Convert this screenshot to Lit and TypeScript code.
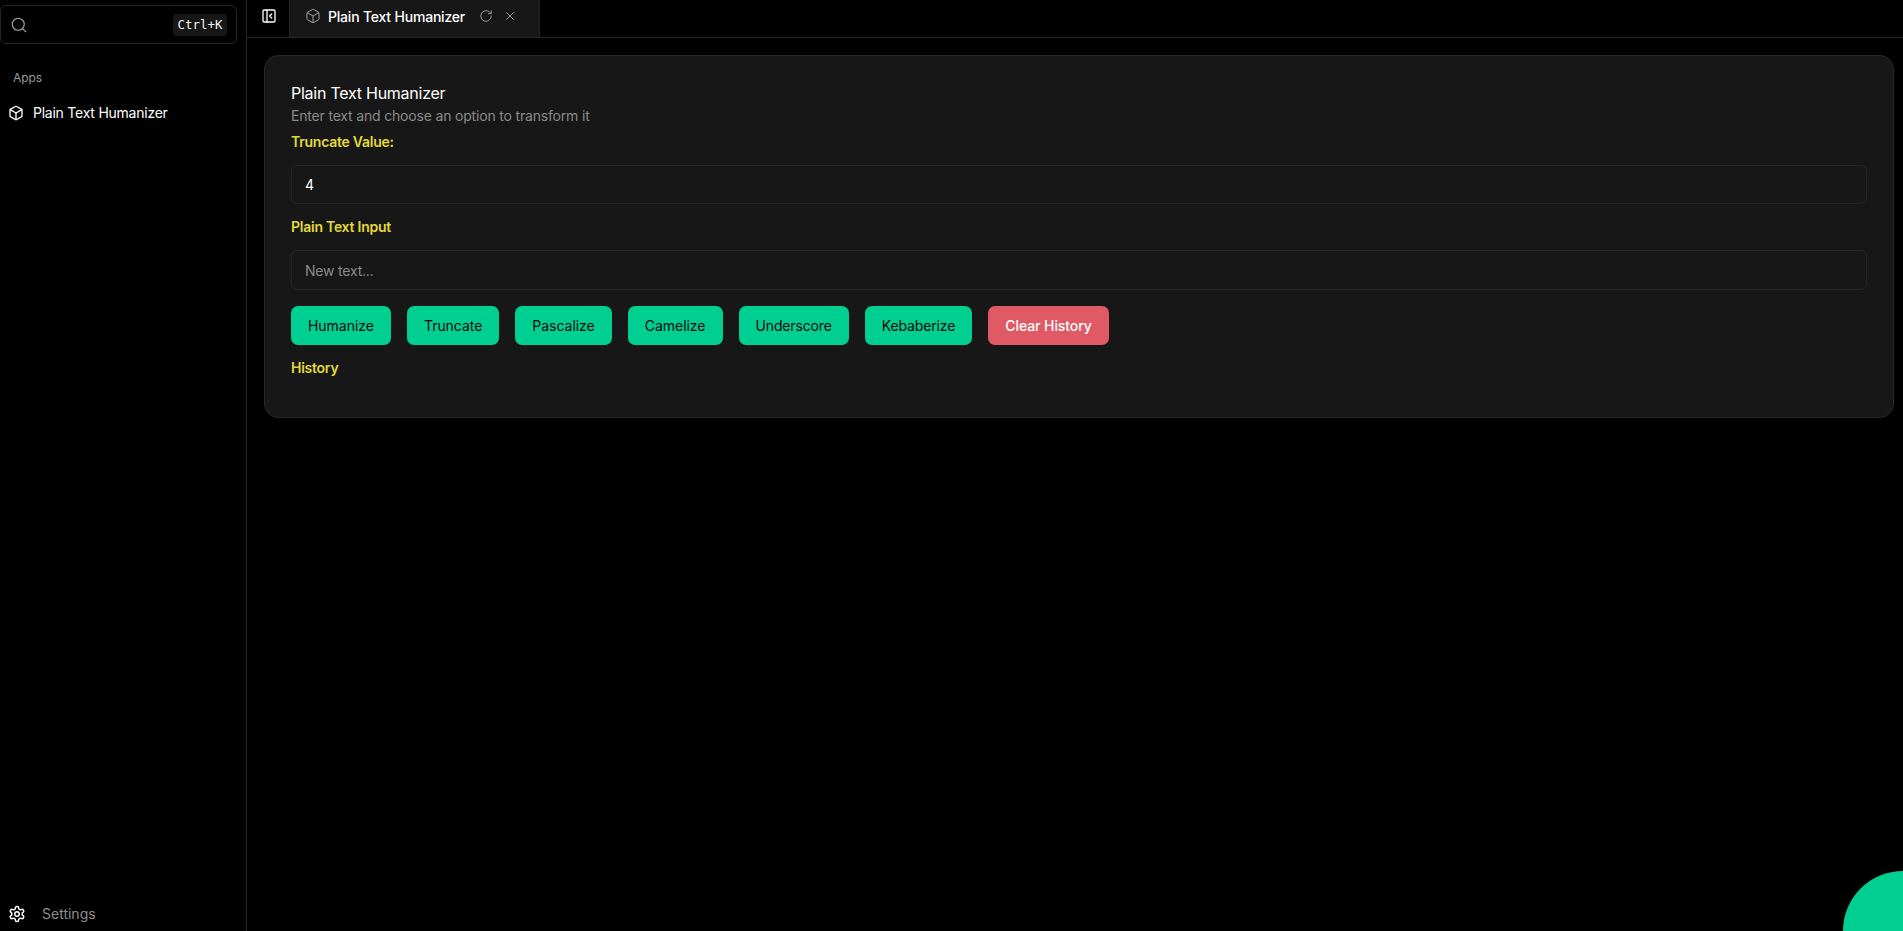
import { LitElement, html, css, svg } from "lit";
import { customElement } from "lit/decorators.js";

const box = svg`<path d="M21 8a2 2 0 0 0-1-1.73l-7-4a2 2 0 0 0-2 0l-7 4A2 2 0 0 0 3 8v8a2 2 0 0 0 1 1.73l7 4a2 2 0 0 0 2 0l7-4A2 2 0 0 0 21 16Z"/><path d="m3.3 7 8.7 5 8.7-5"/><path d="M12 22V12"/>`;

const icon = (size: number, body: unknown, w = 2) => html`<svg width=${size} height=${size} viewBox="0 0 24 24" fill="none" stroke="currentColor" stroke-width=${w} stroke-linecap="round" stroke-linejoin="round">${body}</svg>`;

@customElement("app-root")
export class AppRoot extends LitElement {
  static styles = css`
    :host { display: block; width: 100%; height: 931px; overflow: hidden; position: relative; background: #000; color: #fff; font-family: Inter, "Liberation Sans", sans-serif; }
    * { box-sizing: border-box; }
    .shell { display: flex; height: 100%; }
    .side { width: 247px; flex: none; border-right: 1px solid #262626; display: flex; flex-direction: column; }
    .search { margin: 5px 0 0 0; width: 237px; height: 39px; border: 1px solid #262626; border-radius: 6px; display: flex; align-items: center; justify-content: space-between; padding: 0 9px 0 9px; color: #a3a3a3; }
    kbd { font-family: "DejaVu Sans Mono", monospace; font-size: 12.4px; color: #f5f5f5; background: #171717; border-radius: 4px; height: 22px; width: 54px; display: flex; align-items: center; justify-content: center; }
    .group { font-size: 12px; color: #9a9a9a; padding: 26px 0 0 13px; line-height: 16px; letter-spacing: -0.1px; }
    .item { display: flex; align-items: center; gap: 9px; padding-left: 8px; margin-top: 17px; font-size: 14px; line-height: 20px; color: #fff; letter-spacing: -0.24px; }
    .spacer { flex: 1; }
    .settings { display: flex; align-items: center; gap: 16px; padding: 0 0 7px 8px; font-size: 14px; line-height: 20px; color: #8f8f8f; }
    .settings svg { color: #fff; }
    .main { flex: 1; min-width: 0; display: flex; flex-direction: column; }
    .bar { height: 38px; flex: none; display: flex; border-bottom: 1px solid #262626; }
    .toggle { width: 42px; display: flex; align-items: center; justify-content: center; color: #fff; padding: 0 0 5px 2px; }
    .tab { width: 251px; background: #171717; border-right: 1px solid #262626; border-left: 1px solid #262626; display: flex; align-items: center; padding: 0 0 5px 15px; font-size: 14px; font-weight: 500; color: #fff; letter-spacing: -0.2px; }
    .tab .cube { color: #a3a3a3; margin-right: 7px; display: flex; }
    .tab .act { color: #a3a3a3; display: flex; margin-left: 14px; }
    .tab .act + .act { margin-left: 10px; }
    .content { padding: 17px 9px 0 17px; }
    .card { background: #171717; border: 1px solid #262626; border-radius: 14px; padding: 25px 26px 39px 26px; }
    h2 { margin: 0 0 1px; font-size: 16px; font-weight: 400; line-height: 24px; color: #fff; letter-spacing: -0.25px; }
    .sub { font-size: 14px; line-height: 20px; color: #8a8a8a; letter-spacing: -0.18px; }
    .label { display: block; font-size: 14px; font-weight: 600; line-height: 20px; color: #e3d93e; letter-spacing: -0.25px; }
    .l1 { margin-top: 6px; }
    .l2 { margin-top: 13px; }
    .field { margin-top: 13px; height: 39px; border: 1px solid #262626; border-radius: 6px; display: flex; align-items: center; padding: 0 13px; font-size: 14px; }
    .field.ph { height: 40px; color: #8a8a8a; letter-spacing: -0.2px; }
    .btns { display: flex; gap: 16px; margin-top: 16px; }
    .btn { height: 39px; border-radius: 7px; padding: 0 17px; display: flex; align-items: center; background: #00cf92; color: #09090b; font-size: 14px; font-weight: 400; letter-spacing: -0.03px; }
    .btn:nth-child(n + 5) { letter-spacing: -0.14px; }
    .btn.red { background: #e05a66; color: #fff; font-weight: 500; letter-spacing: -0.08px; }
    .l3 { margin-top: 13px; }
    .blob { position: absolute; right: -60px; bottom: -60px; width: 120px; height: 120px; border-radius: 50%; background: #00cf92; }
  `;

  render() {
    const ops = ["Humanize", "Truncate", "Pascalize", "Camelize", "Underscore", "Kebaberize"];
    return html`
      <div class="shell">
        <aside class="side">
          <div class="search">
            ${icon(18, svg`<circle cx="11" cy="11" r="8"/><path d="m21 21-4.3-4.3"/>`, 1.5)}
            <kbd>Ctrl+K</kbd>
          </div>
          <div class="group">Apps</div>
          <div class="item">${icon(16, box)}<span>Plain Text Humanizer</span></div>
          <div class="spacer"></div>
          <div class="settings">
            ${icon(18, svg`<path d="M12.22 2h-.44a2 2 0 0 0-2 2v.18a2 2 0 0 1-1 1.73l-.43.25a2 2 0 0 1-2 0l-.15-.08a2 2 0 0 0-2.73.73l-.22.38a2 2 0 0 0 .73 2.73l.15.1a2 2 0 0 1 1 1.72v.51a2 2 0 0 1-1 1.74l-.15.09a2 2 0 0 0-.73 2.73l.22.38a2 2 0 0 0 2.73.73l.15-.08a2 2 0 0 1 2 0l.43.25a2 2 0 0 1 1 1.73V20a2 2 0 0 0 2 2h.44a2 2 0 0 0 2-2v-.18a2 2 0 0 1 1-1.73l.43-.25a2 2 0 0 1 2 0l.15.08a2 2 0 0 0 2.73-.73l.22-.39a2 2 0 0 0-.73-2.73l-.15-.08a2 2 0 0 1-1-1.74v-.5a2 2 0 0 1 1-1.74l.15-.09a2 2 0 0 0 .73-2.73l-.22-.38a2 2 0 0 0-2.73-.73l-.15.08a2 2 0 0 1-2 0l-.43-.25a2 2 0 0 1-1-1.73V4a2 2 0 0 0-2-2z"/><circle cx="12" cy="12" r="3"/>`)}
            <span>Settings</span>
          </div>
        </aside>
        <main class="main">
          <div class="bar">
            <div class="toggle">${icon(16, svg`<rect x="3" y="3" width="18" height="18" rx="2"/><path d="M9 3v18"/><path d="m16 15-3-3 3-3"/>`)}</div>
            <div class="tab">
              <span class="cube">${icon(16, box, 1.5)}</span>
              <span>Plain Text Humanizer</span>
              <span class="act">${icon(14, svg`<path d="M21 12a9 9 0 1 1-9-9c2.52 0 4.93 1 6.74 2.74L21 8"/><path d="M21 3v5h-5"/>`, 1.5)}</span>
              <span class="act">${icon(14, svg`<path d="M18 6 6 18"/><path d="m6 6 12 12"/>`, 1.5)}</span>
            </div>
          </div>
          <div class="content">
            <section class="card">
              <h2>Plain Text Humanizer</h2>
              <div class="sub">Enter text and choose an option to transform it</div>
              <span class="label l1">Truncate Value:</span>
              <div class="field">4</div>
              <span class="label l2">Plain Text Input</span>
              <div class="field ph">New text...</div>
              <div class="btns">
                ${ops.map((o) => html`<div class="btn">${o}</div>`)}
                <div class="btn red">Clear History</div>
              </div>
              <span class="label l3">History</span>
            </section>
          </div>
        </main>
      </div>
      <div class="blob"></div>
    `;
  }
}
